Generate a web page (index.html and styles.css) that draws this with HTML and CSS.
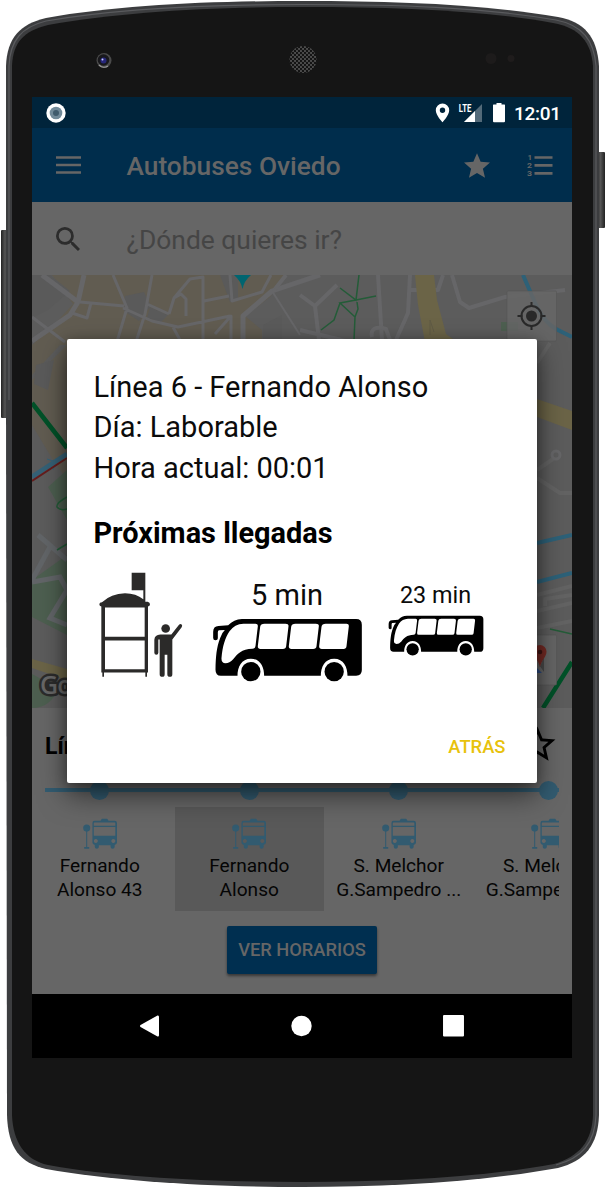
FILE: index.html
```html
<!DOCTYPE html>
<html lang="es">
<head>
<meta charset="utf-8">
<title>Autobuses Oviedo</title>
<link rel="stylesheet" href="styles.css">
</head>
<body>
<svg class="defs" aria-hidden="true">
  <symbol id="stop" viewBox="190 354 104 92">
    <circle cx="201" cy="384" r="10.5"/>
    <path d="M199.500 390h3v50h6v5h-15v-5h6z"/>
    <path fill-rule="evenodd" d="M224 362h18l4-6h16l4 6h18q7 0 7 7v58q0 6-7 7v6q0 5-6 5t-6-5v-5h-35v5q0 5-6 5t-6-5v-6q-7-1-7-7v-58q0-7 6-7zM224 367q-2 0-2 3v7h64v-7q0-3-2-3zM222 381v26h64v-26zM228 416a6 6 0 1 0 .1 0zM280 416a6 6 0 1 0 .1 0z"/>
  </symbol>
  <symbol id="bus" viewBox="36 174 452 192">
    <path fill="#000" d="M125 177H468Q485 177 485 194V330Q485 347 468 347H62Q46 347 46 329C47 288 49 263 60 234Q66 217 74 210L56 211Q53 212 53 217V235Q53 241 46 241Q39 241 39 234V216Q39 198 55 198L84 196Q101 178 125 177z"/>
    <path fill="#fff" d="M130 191H166Q174 191 173 199L166 258Q165 266 157 266C124 267 111 282 99 298Q88 310 76 310Q63 309 64 294C67 259 75 234 88 214Q103 192 130 191zM193 191H256Q266 191 265 199L258 259Q257 267 248 267H181Q172 267 173 258L180 200Q181 191 193 191zM286 191H347Q357 191 356 199L349 259Q348 267 339 267H274Q265 267 266 258L273 200Q274 191 286 191zM377 191H439Q447 191 446 199L439 259Q438 267 430 267H365Q356 267 357 258L364 200Q365 191 377 191z"/>
    <path fill="#fff" d="M112 348C112 320 124 296 152 296S192 320 192 348zM362 348C362 320 374 296 402 296S442 320 442 348z"/>
    <circle cx="152" cy="335" r="29" fill="#000"/><circle cx="402" cy="335" r="29" fill="#000"/>
  </symbol>
</svg>

<div class="device">
  <svg class="shell" viewBox="0 0 605 1188" aria-hidden="true">
    <defs>
      <pattern id="mesh" width="4" height="4" patternUnits="userSpaceOnUse"><rect width="4" height="4" fill="#4c4c4c"/><circle cx="1" cy="1" r="1.150" fill="#111"/><circle cx="3" cy="3" r="1.150" fill="#111"/></pattern>
      <linearGradient id="key"><stop offset="0" stop-color="#222"/><stop offset=".5" stop-color="#555"/><stop offset="1" stop-color="#222"/></linearGradient>
    </defs>
    <rect x="1" y="230" width="8" height="188" rx="1" fill="url(#key)"/>
    <rect x="596" y="152" width="9" height="76" rx="1" fill="url(#key)"/>
    <path fill="#3c3d3f" d="M6 400V66C7 38 20 24 46 18C120 5 210 1 303 1S480 4 558 17C584 22 597 36 599 66V1115C598 1145 585 1161 558 1168C480 1182 390 1187 303 1187S120 1182 46 1169C20 1163 8 1148 7 1115z"/>
    <path fill="none" stroke="#5a5b5e" stroke-width="1.200" d="M9 400V66C10 40 22 27 46 21C120 8 210 4.500 303 4.500S480 7 556 20C582 25 594 40 596 66V1115C595 1143 582 1158 556 1165"/>
    <path fill="#151515" d="M12 400V66C13 42 24 31 48 25C120 12 210 7 303 7S480 10 553 23C580 28 591 42 593 66V1115C592 1141 580 1156 554 1164C478 1178 390 1182 303 1182S120 1178 48 1165C25 1160 13 1142 12 1115z"/>
    <circle cx="104" cy="60.500" r="7.500" fill="#4a4a4a"/><circle cx="103.500" cy="60" r="5.800" fill="#18181c"/><circle cx="103.500" cy="60.500" r="3" fill="#26267a"/><circle cx="102.500" cy="59.500" r="1" fill="#cfd0ff"/><path d="M99 65a7 7 0 0 0 9 1" fill="none" stroke="#999" stroke-width="1.300"/>
    <circle cx="303" cy="59.500" r="13.500" fill="url(#mesh)"/>
    <circle cx="491" cy="58.500" r="5.500" fill="#1d1b1b"/><circle cx="511" cy="58.500" r="3.500" fill="#1f1c1c"/>
  </svg>

  <main class="screen">
    <header class="status">
      <svg class="record" viewBox="0 0 20 20"><circle cx="10" cy="10" r="9.700" fill="#fff"/><circle cx="10" cy="10" r="6.300" fill="#718a99"/><circle cx="10" cy="10" r="3" fill="#3f5b6c"/></svg>
      <svg class="system" viewBox="435 102 72 22">
        <path fill="#fff" fill-rule="evenodd" d="M442.500 103.500a6.700 6.700 0 0 0-6.700 6.700c0 5 6.700 12 6.700 12s6.700-7 6.700-12a6.700 6.700 0 0 0-6.700-6.700zm0 4a2.700 2.700 0 1 1 0 5.400 2.700 2.700 0 0 1 0-5.400z"/>
        <path fill="#536a79" d="M482 104v18h-18z"/><path fill="#fff" d="M475 111v11h-11z"/>
        <path fill="#00243b" d="M457 102h15v10h-15z"/>
        <text class="lte" x="458.800" y="112" textLength="12.500" lengthAdjust="spacingAndGlyphs">LTE</text>
        <path fill="#fff" d="M496.500 103h5v1.500h3q.5 0 .5.700v16q0 1-1 1h-10q-1 0-1-1v-16q0-.7.500-.7h3z"/>
      </svg>
      <span class="clock">12:01</span>
    </header>
    <div class="toolbar">
      <svg class="menu" viewBox="0 0 25 18"><path d="M0 1.500h25M0 9h25M0 16.500h25" stroke="#666" stroke-width="2.700"/></svg>
      <h1 class="title">Autobuses Oviedo</h1>
      <svg class="fav" viewBox="2 2 20 19"><path fill="#666" d="M12 17.270L18.180 21l-1.640-7.030L22 9.240l-7.190-.61L12 2 9.190 8.630 2 9.240l5.460 4.730L5.820 21z"/></svg>
      <svg class="list" viewBox="0 0 26 24"><path d="M7.500 4.500h18M7.500 12.300h18M7.500 20.300h18" stroke="#666" stroke-width="2.700"/><g class="nums"><text x="0.500" y="6.500">1</text><text x="0" y="14.800" textLength="5" lengthAdjust="spacingAndGlyphs">2</text><text x="0" y="23" textLength="5" lengthAdjust="spacingAndGlyphs">3</text></g></svg>
    </div>
    <div class="search">
      <svg class="lens" viewBox="3 3 17.500 17.500"><path fill="#2c2c2c" d="M15.500 14h-.79l-.28-.27A6.470 6.470 0 0 0 16 9.500 6.500 6.500 0 1 0 9.500 16c1.610 0 3.090-.59 4.230-1.570l.27.28v.79l5 4.990L20.490 19zm-6 0a4.500 4.500 0 1 1 0-9 4.500 4.500 0 0 1 0 9z"/></svg>
      <span>¿Dónde quieres ir?</span>
    </div>

    <svg class="map" viewBox="32 275 540 433" preserveAspectRatio="none">
      <rect x="32" y="275" width="540" height="433" fill="#5c5c5c"/>
      <path fill="#615c51" d="M52 275H285L270 297L245 316L262 330V345H60L32 375V345L52 327L73 304zM32 380L67 345V480L50 455L32 425z"/>
      <path fill="#5a5a5a" d="M32 275H50L70 291L48 310L32 318zM125 296L144 292L151 306L139 321L124 311zM150 307L168 315L161 322L147 318zM220 275H238V300L230 302zM263 325L282 315V345H263zM36 365L54 360L48 390L34 384z"/>
      <g fill="none" stroke="#666668" stroke-linejoin="round">
        <path stroke-width="5" d="M42 275L78 302L84 275M78 302L70 315L32 341"/>
        <path stroke-width="3" d="M80 302L124 306M32 317L65 342M72 313L87 318L91 303M113 275L127 308L116 345M152 275L145 314L135 345M147 304L169 314M123 308L152 321L178 327L230 316M169 314L174 298L181 294L186 299V316M174 298L190 279L203 277V340M230 275L232 301L262 292L271 275M204 301L229 296M215 334L231 316V340M173 327L180 340"/>
        <path stroke-width="5" d="M243 345V316L272 291L320 275"/>
        <path stroke-width="2" d="M272 291L300 335"/>
        <path stroke-width="4" d="M275 289L286 275M300 295L315 306L337 285M315 306L319 340M300 330L350 342M378 275L382 340M410 275L408 313L396 340M410 290H438L443 275M452 275L460 302L469 308L505 297L565 290"/>
        <path stroke-width="4" d="M372 337C370 328 377 326 386 329L390 340"/>
        <path stroke-width="4" stroke="#636363" d="M550 343L537 363M537 470L553 459M537 478L560 493H572M537 595L572 586M537 611L572 603M537 628L572 621M545 606V599L572 595"/>
        <circle cx="556" cy="455" r="4" stroke-width="3"/>
      </g>
      <g fill="#4d5f50"><path d="M48 487L67 470V520zM32 580L67 555V635L32 617zM32 674L58 688Q51 708 32 708z"/><path d="M501 322h17v9h-17z"/></g>
      <g fill="none" stroke="#626568" stroke-width="5"><path d="M38 535L67 560M50 547L32 580M32 582L60 577L67 590L50 618L67 625"/></g>
      <path fill="#6b6447" d="M415 275H434L437 300L446 334L457 342H425L418 305zM537 399L572 411V430L537 417zM32 659L67 669V680L32 668z"/>
      <path fill="none" stroke="#605b45" d="M430 335V320L434 332"/>
      <g fill="none" stroke="#245c38" stroke-width="1.500"><path d="M359 275L356 300L340 288M356 300L376 296M356 300L340 303L355 317L354 340M340 303L334 320L321 330M357 302L358 309L355 317M67 497Q56 503 57 507Q60 511 67 509M57 550L67 544M550 629L572 634"/></g>
      <path fill="none" stroke="#2d6178" stroke-width="4" d="M523 275L536 305Q545 323 556 329L572 337M537 543L572 535M537 582L572 573"/>
      <path stroke="#005128" stroke-width="4.500" d="M32 403L67 448M543 708L572 662"/>
      <path fill="none" stroke="#356176" stroke-width="5" d="M32 477L67 454"/><path fill="none" stroke="#356176" d="M47 459L56 462L53 470"/><path stroke="#651d1d" stroke-width="2" d="M32 481L67 458"/>
      <path fill="#006570" d="M234 275H251Q244 281 242.500 289Q241 281 234 275z"/>
      <rect x="507" y="291" width="49.500" height="50" rx="1" fill="#666" fill-opacity=".85" stroke="#555" stroke-width=".6"/>
      <g fill="none" stroke="#292929" stroke-width="2"><circle cx="531.500" cy="316" r="10"/><path d="M531.500 302v5M531.500 325v5M517.500 316h5M540.500 316h5"/></g><circle cx="531.500" cy="316" r="5.500" fill="#292929"/>
      <rect x="507" y="635" width="49.500" height="50" rx="1" fill="#666" stroke="#555" stroke-width=".6"/>
      <path fill="#2c4a80" d="M530 673L537 668L542 673z"/><path fill="#4a4a4a" d="M537 662L540 667L544 656V672z"/><path fill="#752a24" d="M540 645a6.500 6.500 0 0 1 6.500 6.500C546.500 657 542 659 540 667C538 659 533.500 657 533.500 651.500A6.500 6.500 0 0 1 540 645z"/><circle cx="540" cy="652" r="2.300" fill="#3c1513"/>
      <text class="credit" x="40" y="694">Google</text>
    </svg>

    <section class="panel">
      <div class="line-head">
        <h2 class="line-name">Línea 6</h2>
        <svg class="line-fav" viewBox="0 0 24 24"><path d="M22 9.240l-7.190-.62L12 2 9.190 8.630 2 9.240l5.460 4.730L5.820 21 12 17.270 18.180 21l-1.630-7.030zM12 15.400l-3.760 2.270 1-4.280-3.320-2.880 4.380-.38L12 6.100l1.710 4.040 4.380.38-3.320 2.880 1 4.280z"/></svg>
      </div>
      <div class="route">
        <div class="stop"><i class="dot"></i><div class="card"><svg><use href="#stop"/></svg><span>Fernando<br>Alonso 43</span></div></div>
        <div class="stop"><i class="dot"></i><div class="card selected"><svg><use href="#stop"/></svg><span>Fernando<br>Alonso</span></div></div>
        <div class="stop"><i class="dot"></i><div class="card"><svg><use href="#stop"/></svg><span>S. Melchor<br>G.Sampedro ...</span></div></div>
        <div class="stop"><i class="dot"></i><div class="card"><svg><use href="#stop"/></svg><span>S. Melchor<br>G.Sampedro ...</span></div></div>
      </div>
      <button class="schedule">VER HORARIOS</button>
    </section>

    <nav class="nav">
      <svg viewBox="0 0 20 22"><path fill="#fff" d="M18 .5Q19.500 0 19.500 2V20Q19.500 22 18 21.500L1 12Q0 11 1 10z"/></svg>
      <svg viewBox="0 0 22 22"><circle cx="11" cy="11" r="10.700" fill="#fff"/></svg>
      <svg viewBox="0 0 20 21"><rect width="20" height="20.500" rx="1" fill="#fff"/></svg>
    </nav>

    <section class="dialog">
      <p class="info">Línea 6 - Fernando Alonso<br>Día: Laborable<br>Hora actual: 00:01</p>
      <h3 class="heading">Próximas llegadas</h3>
      <div class="arrivals">
        <svg class="shelter" viewBox="40 35 255 320" fill="#2b2a29">
          <path d="M141 40h41v87h7q7 2 7 7q0 5-6 7v198h-3v13h-5v-13H58v13h-5v-13h-3V141q-6-2-6-7q0-6 8-6Q79 102 121 101Q154 101 176 119V92h-35z"/>
          <path fill="#fff" d="M61 144H180V232H61zM61 243H180V329H61z"/>
          <circle cx="243" cy="207" r="13"/>
          <path d="M227 225H260L283 196Q287 192 291 195Q294 198 291 203L263 240V344Q263 352 256 352Q248 352 248 344V286H240V344Q240 352 233 352Q225 352 225 344V240H221V280Q221 286 215 286Q209 286 209 280V241Q210 226 227 225z"/>
        </svg>
        <div class="next"><span>5 min</span><svg><use href="#bus"/></svg></div>
        <div class="later"><span>23 min</span><svg><use href="#bus"/></svg></div>
      </div>
      <button class="back">ATRÁS</button>
    </section>
  </main>
</div>
</body>
</html>
```
FILE: styles.css
```css
* { box-sizing: border-box; }
body { margin: 0; background: #fff; font-family: Roboto, sans-serif; }
h1, h2, h3, p { margin: 0; }
button { border: 0; font-family: inherit; padding: 0; }
svg { display: block; flex: none; }
.defs { position: absolute; width: 0; height: 0; }
.device { position: relative; width: 605px; height: 1188px; padding: 97px 33px 130px 32px; overflow: hidden; }
.shell { position: absolute; inset: 0; width: 605px; height: 1188px; }
.screen { position: relative; width: 540px; height: 961px; display: flex; flex-direction: column; background: #666; }

.status { height: 31px; background: #00243b; display: flex; align-items: center; padding: 0 11px 0 14px; }
.record { width: 20px; height: 20px; }
.system { width: 72px; height: 22px; margin-left: auto; }
.lte { font: bold 10px Roboto, sans-serif; fill: #fff; }
.clock { color: #fff; font-size: 19px; font-weight: 500; line-height: 31px; margin-left: 7px; width: 47px; white-space: nowrap; padding-top: 2px; letter-spacing: -0.3px; }

.toolbar { height: 74px; background: #002d4c; display: flex; align-items: center; padding: 0 19px 0 24px; }
.menu { width: 25px; height: 18px; }
.title { color: #666; font-size: 26.3px; font-weight: 500; line-height: 32px; margin: 2px auto 0 45.5px; white-space: nowrap; }
.fav { width: 26px; height: 25px; margin-right: 37px; }
.list { width: 26px; height: 24px; }
.nums { font: bold 8px Roboto, sans-serif; fill: #666; }

.search { height: 73px; background: #666; display: flex; align-items: center; padding: 0 24px; color: #454545; font-size: 26.4px; gap: 46.5px; white-space: nowrap; }
.search span { padding-top: 3px; }
.lens { width: 24px; height: 24px; }

.map { width: 540px; height: 433px; }
.credit { font: 600 25px "Open Sans", sans-serif; fill: #666; stroke: #2b2b2b; stroke-width: 5px; stroke-linejoin: round; paint-order: stroke; letter-spacing: -1px; }

.panel { height: 286px; padding: 0 13px; display: flex; flex-direction: column; align-items: center; }
.line-head { width: 100%; height: 72px; display: flex; justify-content: space-between; align-items: center; }
.line-name { font-size: 23px; font-weight: 700; line-height: 28px; padding-top: 5px; }
.line-fav { width: 43px; height: 43px; }
.route { width: 514px; height: 131px; display: flex; overflow: hidden; }
.stop { flex: none; width: 149.5px; height: 131px; display: flex; flex-direction: column; align-items: center; background: linear-gradient(#325b70, #325b70) 0 8px / 100% 4px no-repeat; }
.stop:first-child { margin-left: -20px; }
.dot { width: 19px; height: 19px; border-radius: 50%; background: #325b70; margin-top: 1px; flex: none; }
.card { width: 149.5px; height: 105px; margin-top: 6.5px; padding-top: 11.5px; display: flex; flex-direction: column; align-items: center; text-align: center; font-size: 19.1px; line-height: 24.3px; color: #050505; }
.card svg { width: 35px; height: 31px; fill: #325b70; margin: 0 0 5px 1px; }
.card span { white-space: nowrap; }
.selected { background: #595959; }
.schedule { width: 150px; height: 48px; margin-top: 14.5px; border-radius: 2px; background: #002f50; color: #666; font-size: 18.3px; font-weight: 500; box-shadow: 0 2px 3px #0007; white-space: nowrap; }

.nav { height: 64px; background: #000; display: flex; align-items: center; justify-content: space-between; padding: 0 108px 0 107px; }
.nav svg { width: 21px; height: 22px; }

.dialog { position: absolute; left: 35px; top: 242px; width: 470px; height: 444px; border-radius: 2px; background: #fff; box-shadow: 0 12px 28px #0008, 0 2px 12px #0004; padding: 27.5px 27px 20px 26.5px; display: flex; flex-direction: column; color: #0b0b0b; }
.info { font-size: 29px; line-height: 40.5px; white-space: nowrap; }
.heading { font-size: 28.9px; line-height: 40px; margin-top: 24.5px; font-weight: 700; color: #000; }
.arrivals { display: flex; align-items: flex-start; margin-top: 18.5px; padding-left: 4.5px; height: 112px; }
.shelter { width: 85px; height: 107px; }
.next, .later { display: flex; flex-direction: column; align-items: center; }
.next { width: 151px; margin-left: 29px; font-size: 29px; line-height: 34px; padding-top: 6.5px; }
.next span, .later span { margin-left: -1px; }
.next svg { width: 151px; height: 64px; margin-top: 6.5px; }
.later { width: 96px; margin-left: 25px; font-size: 23.4px; line-height: 28px; padding-top: 9.5px; }
.later svg { width: 96px; height: 41px; margin-top: 6.5px; }
.back { align-self: flex-end; margin: 49px 4.5px 0 0; background: none; color: #e8c20c; font-size: 18.4px; font-weight: 500; line-height: 30px; }
```
